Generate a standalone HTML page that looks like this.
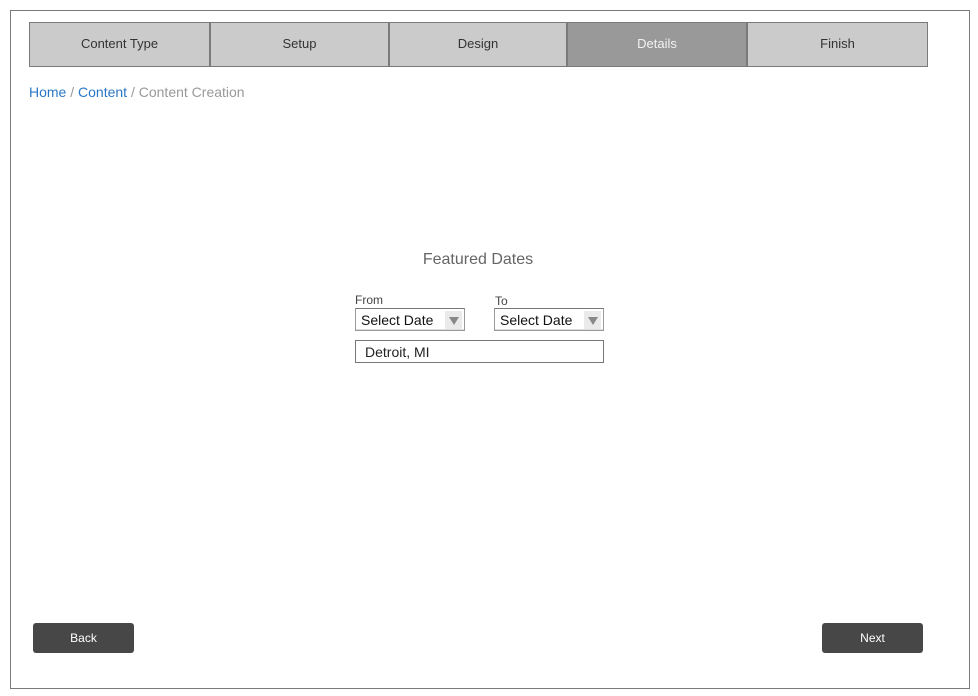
<!DOCTYPE html>
<html><head><meta charset="utf-8"><style>
*{margin:0;padding:0;box-sizing:border-box}
body{width:978px;height:696px;background:#fff;font-family:"Liberation Sans",Arial,sans-serif;position:relative;overflow:hidden}
.frame{position:absolute;left:10px;top:10px;width:960px;height:679px;border:1px solid #7a7a7a}
.tabs{position:absolute;left:29px;top:22px;width:899px;height:45px;border:1px solid #7a7a7a;display:flex;background:#cbcbcb}
.tab{height:100%;display:flex;align-items:center;justify-content:center;font-size:13px;color:#333;border-right:2px solid #7a7a7a;padding-bottom:2px}
.tab:last-child{border-right:none}
.tab.act{background:#999;color:#f2f2f2}
.bc{position:absolute;left:29px;top:84px;font-size:14px;color:#999}
.bc a{color:#2b78c5;text-decoration:none}
.title{position:absolute;left:0;width:956px;top:251px;text-align:center;font-size:16px;color:#666}
.lbl{position:absolute;font-size:12px;color:#444}
.sel{position:absolute;top:308px;width:110px;height:23px;border:1px solid #999;border-top-color:#777;background:#fff;font-size:14px;color:#111;padding:3px 0 0 5px;box-shadow:inset 0 -1px 0 #ddd}
.sel .ar{position:absolute;right:2px;top:2px;width:17px;height:18px;background:#eaeaea}
.sel .ar:after{content:"";position:absolute;left:4px;top:6px;border-left:5px solid transparent;border-right:5px solid transparent;border-top:8px solid #888}
.inp{position:absolute;left:355px;top:340px;width:249px;height:23px;border:1px solid #777;font-size:14px;color:#222;padding:3px 0 0 9px}
.btn{position:absolute;top:623px;width:101px;height:30px;background:#474747;border-radius:3px;color:#fff;font-size:12px;display:flex;align-items:center;justify-content:center}
</style></head><body>
<div class="frame"></div>
<div class="tabs">
<div class="tab" style="width:181px">Content Type</div>
<div class="tab" style="width:179px">Setup</div>
<div class="tab" style="width:178px">Design</div>
<div class="tab act" style="width:180px">Details</div>
<div class="tab" style="flex:1">Finish</div>
</div>
<div class="bc"><a>Home</a> / <a>Content</a> / Content Creation</div>
<div class="title">Featured Dates</div>
<div class="lbl" style="left:355px;top:293px">From</div>
<div class="lbl" style="left:495px;top:294px">To</div>
<div class="sel" style="left:355px">Select Date<span class="ar"></span></div>
<div class="sel" style="left:494px">Select Date<span class="ar"></span></div>
<div class="inp">Detroit, MI</div>
<div class="btn" style="left:33px">Back</div>
<div class="btn" style="left:822px">Next</div>
</body></html>
